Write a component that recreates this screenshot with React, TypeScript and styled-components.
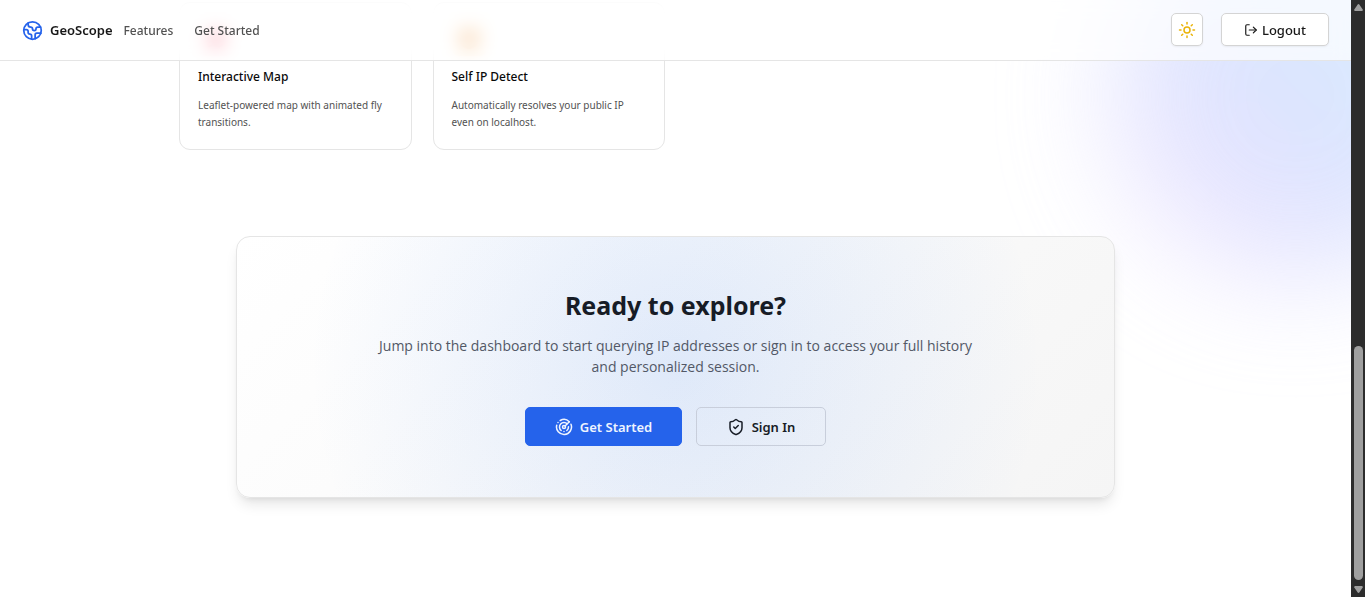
import React from "react";
import styled, { createGlobalStyle } from "styled-components";
import { Earth, Radar, ShieldCheck, Sun, LogOut, Map, Crosshair } from "lucide-react";

const GlobalStyle = createGlobalStyle`
  * { box-sizing: border-box; }
  body {
    margin: 0;
    background: #ffffff;
    color: #0a0a0a;
    font-family: "Noto Sans", "Open Sans", sans-serif;
    font-size: 14px;
  }
  h2, h3, p { margin: 0; }
  a { color: inherit; text-decoration: none; }
  button { font-family: inherit; cursor: pointer; }
`;

const Shell = styled.div`
  display: grid;
  grid-template-columns: minmax(0, 1fr) 14px;
  min-height: 100vh;
`;

const Page = styled.div`
  position: relative;
  overflow: hidden;
`;

const Glow = styled.div`
  position: absolute;
  top: -90px;
  right: -130px;
  width: 370px;
  height: 370px;
  border-radius: 50%;
  background: linear-gradient(45deg, #e9d5ff 5%, #c7d2fe 45%, #bae6fd 90%);
  opacity: 0.6;
  filter: blur(56px);
`;

const Header = styled.header`
  position: absolute;
  inset: 0 0 auto 0;
  z-index: 2;
  display: flex;
  align-items: center;
  justify-content: space-between;
  height: 61px;
  padding: 0 22px;
  border-bottom: 1px solid #e5e5e5;
  background: rgba(255, 255, 255, 0.7);
  backdrop-filter: blur(8px);
`;

const Nav = styled.nav`
  display: flex;
  align-items: center;
  gap: 21px;
  font-size: 12px;
  font-weight: 500;
  color: #525252;
`;

const BrandGroup = styled.div`
  display: flex;
  align-items: center;
  gap: 11px;
`;

const Brand = styled.a`
  display: flex;
  align-items: center;
  gap: 7px;
  font-size: 13px;
  font-weight: 600;
  color: #171717;
  svg { color: #2563eb; }
`;

const Actions = styled.div`
  display: flex;
  align-items: center;
  gap: 18px;
  padding-bottom: 1px;
`;

const HeaderButton = styled.button<{ $wide?: boolean }>`
  display: flex;
  align-items: center;
  justify-content: center;
  gap: 4px;
  width: ${(p) => (p.$wide ? "108px" : "32px")};
  height: 33px;
  padding: 0;
  border: 1px solid #d4d4d4;
  border-radius: 5px;
  background: #ffffff;
  box-shadow: 0 1px 2px rgba(0, 0, 0, 0.06);
  font-size: 13px;
  font-weight: 500;
  color: #171717;
`;

const Main = styled.main`
  position: relative;
  padding: 2px 21px 98px;
`;

const Cards = styled.section`
  display: grid;
  grid-template-columns: repeat(4, minmax(0, 1fr));
  gap: 21px;
  max-width: 993px;
  margin: 0 auto;
`;

const Card = styled.article`
  padding: 18px;
  border: 1px solid #e5e5e5;
  border-radius: 11px;
  background: rgba(255, 255, 255, 0.7);
`;

const CardIcon = styled.div<{ $tint: string; $color: string }>`
  display: flex;
  align-items: center;
  justify-content: center;
  width: 35px;
  height: 35px;
  border-radius: 7px;
  background: ${(p) => p.$tint};
  color: ${(p) => p.$color};
`;

const CardTitle = styled.h3`
  margin-top: 11px;
  font-size: 12px;
  line-height: 20px;
  font-weight: 500;
`;

const CardText = styled.p`
  margin-top: 10px;
  font-size: 10px;
  line-height: 17px;
  color: #525252;
`;

const CallToAction = styled.section`
  display: flex;
  flex-direction: column;
  align-items: center;
  max-width: 879px;
  margin: 86px auto 0;
  padding: 50px 56px 51px;
  border: 1px solid #e5e5e5;
  border-radius: 14px;
  background:
    radial-gradient(circle at center, rgba(59, 130, 246, 0.14), transparent 80%),
    linear-gradient(135deg, #ffffff, #fafafa 50%, #f5f5f5);
  box-shadow: 0 9px 14px -3px rgba(0, 0, 0, 0.1), 0 4px 6px -4px rgba(0, 0, 0, 0.1);
  text-align: center;
`;

const CtaTitle = styled.h2`
  font-size: 25px;
  line-height: 36px;
  font-weight: 700;
  color: #171c26;
`;

const CtaText = styled.p`
  max-width: 616px;
  margin-top: 12px;
  font-family: "Open Sans", "Noto Sans", sans-serif;
  font-size: 14px;
  line-height: 21px;
  color: #525866;
`;

const CtaButtons = styled.div`
  display: flex;
  gap: 14px;
  margin-top: 30px;
`;

const CtaButton = styled.button<{ $primary?: boolean }>`
  display: flex;
  align-items: center;
  justify-content: center;
  gap: 7px;
  width: ${(p) => (p.$primary ? "157px" : "130px")};
  height: 39px;
  padding: 0;
  border: 1px solid ${(p) => (p.$primary ? "#2563eb" : "#c8cedb")};
  border-radius: 5px;
  background: ${(p) => (p.$primary ? "#2563eb" : "transparent")};
  color: ${(p) => (p.$primary ? "#eef4ff" : "#171c26")};
  font-size: 13px;
  font-weight: 600;
`;

const ScrollBar = styled.div`
  position: sticky;
  top: 0;
  display: flex;
  flex-direction: column;
  align-items: center;
  height: 100vh;
  padding: 4px 0;
  background: #2c2c2c;
  color: #9f9f9f;
`;

const Track = styled.div`
  display: flex;
  flex-direction: column;
  flex: 1;
  width: 9px;
  padding: 6px 0;
`;

const TrackSpace = styled.div`
  flex: 330;
`;

const Thumb = styled.div`
  flex: 234;
  border-radius: 5px;
  background: #9f9f9f;
`;

export default function App() {
  return (
    <>
      <GlobalStyle />
      <Shell>
        <Page>
          <Glow />
          <Header>
            <BrandGroup>
              <Brand href="#home">
                <Earth size={21} />
                GeoScope
              </Brand>
              <Nav>
                <a href="#features">Features</a>
                <a href="#start">Get Started</a>
              </Nav>
            </BrandGroup>
            <Actions>
              <HeaderButton aria-label="Toggle theme">
                <Sun size={18} color="#eab308" />
              </HeaderButton>
              <HeaderButton $wide>
                <LogOut size={14} />
                Logout
              </HeaderButton>
            </Actions>
          </Header>
          <Main>
            <Cards id="features">
              <Card>
                <CardIcon $tint="#fff1f2" $color="#f43f5e"><Map size={20} strokeWidth={3} /></CardIcon>
                <CardTitle>Interactive Map</CardTitle>
                <CardText>Leaflet-powered map with animated fly transitions.</CardText>
              </Card>
              <Card>
                <CardIcon $tint="#fff3e2" $color="#e87c1a"><Crosshair size={20} strokeWidth={4} /></CardIcon>
                <CardTitle>Self IP Detect</CardTitle>
                <CardText>Automatically resolves your public IP even on localhost.</CardText>
              </Card>
            </Cards>
            <CallToAction id="start">
              <CtaTitle>Ready to explore?</CtaTitle>
              <CtaText>
                Jump into the dashboard to start querying IP addresses or sign in to access your full history and
                personalized session.
              </CtaText>
              <CtaButtons>
                <CtaButton $primary>
                  <Radar size={18} />
                  Get Started
                </CtaButton>
                <CtaButton>
                  <ShieldCheck size={18} />
                  Sign In
                </CtaButton>
              </CtaButtons>
            </CallToAction>
          </Main>
        </Page>
        <ScrollBar aria-hidden="true">
          <svg width="9" height="7" viewBox="0 0 9 7" fill="currentColor"><path d="M4.500 0 Q5 0 5.500 .7L8.700 5.500Q9 7 8 7H1Q0 7 .3 5.500L3.500 .7Q4 0 4.500 0Z" /></svg>
          <Track>
            <TrackSpace />
            <Thumb />
          </Track>
          <svg width="9" height="7" viewBox="0 0 9 7" fill="currentColor"><path d="M4.500 7Q5 7 5.500 6.300L8.700 1.500Q9 0 8 0H1Q0 0 .3 1.500L3.500 6.300Q4 7 4.500 7Z" /></svg>
        </ScrollBar>
      </Shell>
    </>
  );
}
